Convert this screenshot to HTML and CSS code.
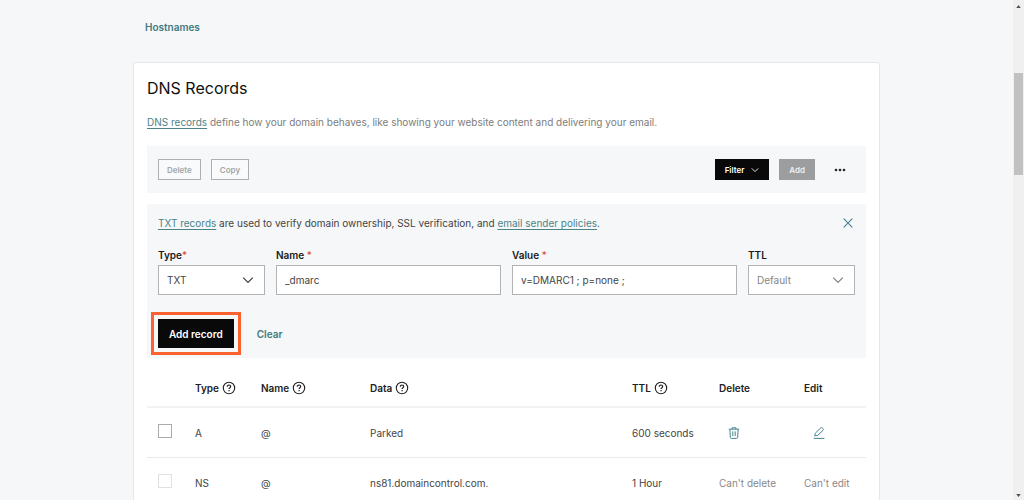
FILE: index.html
```html
<!DOCTYPE html>
<html lang="en">
<head>
<meta charset="utf-8">
<meta name="viewport" content="width=device-width, initial-scale=1">
<title>DNS Records</title>
<link rel="stylesheet" href="styles.css">
</head>
<body>
<svg class="sprite" aria-hidden="true">
  <symbol id="chevron" viewBox="0 0 10 10"><path d="M1 3l4 4 4-4" fill="none" stroke="currentColor" stroke-width="1.1"/></symbol>
  <symbol id="help" viewBox="0 0 14 14"><circle cx="7" cy="7" r="5.700" fill="none" stroke="currentColor" stroke-width="1.1"/><path d="M5.300 5.700c0-1 .7-1.700 1.700-1.700s1.700.6 1.700 1.500c0 1.200-1.600 1.200-1.600 2.400M7.100 9v1.200" fill="none" stroke="currentColor" stroke-width="1.2"/></symbol>
</svg>
<div class="shell">
  <main class="page">
    <nav class="tabs"><a class="tab" href="#hostnames">Hostnames</a></nav>
    <section class="card">
      <h1 class="title">DNS Records</h1>
      <p class="intro"><a class="link" href="#about">DNS records</a> define how your domain behaves, like showing your website content and delivering your email.</p>

      <div class="toolbar">
        <button class="btn btn-outline" type="button" disabled>Delete</button>
        <button class="btn btn-outline" type="button" disabled>Copy</button>
        <span class="spacer"></span>
        <button class="btn btn-dark" type="button">Filter <svg class="btn-icon"><use href="#chevron"/></svg></button>
        <button class="btn btn-grey" type="button" disabled>Add</button>
        <button class="btn-more" type="button" aria-label="More actions"><svg width="12" height="4" viewBox="0 0 12 4"><circle cx="2" cy="2" r="1.300"/><circle cx="6" cy="2" r="1.300"/><circle cx="10" cy="2" r="1.300"/></svg></button>
      </div>

      <form class="record-form">
        <div class="form-head">
          <p class="hint"><a class="link" href="#txt">TXT records</a> are used to verify domain ownership, SSL verification, and <a class="link" href="#policies">email sender policies</a>.</p>
          <button class="btn-close" type="button" aria-label="Close"><svg width="10" height="10" viewBox="0 0 10 10"><path d="M.7.7l8.600 8.600M9.300.7L.7 9.300" fill="none" stroke="currentColor" stroke-width="1.1"/></svg></button>
        </div>
        <div class="fields">
          <div class="field">
            <label class="label" for="type">Type<span class="required">*</span></label>
            <div class="select-wrap">
              <select class="control" id="type"><option>TXT</option></select>
              <svg class="select-icon"><use href="#chevron"/></svg>
            </div>
          </div>
          <div class="field">
            <label class="label" for="name">Name <span class="required">*</span></label>
            <input class="control" id="name" type="text" value="_dmarc">
          </div>
          <div class="field">
            <label class="label" for="value">Value <span class="required">*</span></label>
            <input class="control" id="value" type="text" value="v=DMARC1 ; p=none ;">
          </div>
          <div class="field">
            <label class="label" for="ttl">TTL</label>
            <div class="select-wrap muted">
              <select class="control" id="ttl"><option>Default</option></select>
              <svg class="select-icon"><use href="#chevron"/></svg>
            </div>
          </div>
        </div>
        <div class="actions">
          <button class="btn-submit" type="button">Add record</button>
          <button class="btn-clear" type="reset">Clear</button>
        </div>
      </form>

      <table class="records">
        <colgroup><col class="c-check"><col class="c-type"><col class="c-name"><col><col class="c-ttl"><col class="c-delete"><col class="c-edit"></colgroup>
        <thead>
          <tr>
            <td></td>
            <th scope="col"><span class="th">Type <svg class="help"><use href="#help"/></svg></span></th>
            <th scope="col"><span class="th">Name <svg class="help"><use href="#help"/></svg></span></th>
            <th scope="col"><span class="th">Data <svg class="help"><use href="#help"/></svg></span></th>
            <th scope="col"><span class="th">TTL <svg class="help"><use href="#help"/></svg></span></th>
            <th scope="col">Delete</th>
            <th scope="col">Edit</th>
          </tr>
        </thead>
        <tbody>
          <tr>
            <td class="check-cell"><input class="check" type="checkbox" aria-label="Select A record"></td>
            <td>A</td><td>@</td><td>Parked</td><td>600 seconds</td>
            <td><button class="btn-row" type="button" aria-label="Delete record"><svg width="12" height="12" viewBox="0 0 12 12" fill="none" stroke="currentColor"><path d="M.8 2.200h10.400M4 2V.8h4V2M1.900 2.400l.4 8q.1 1 1.100 1h5.200q1 0 1.100-1l.4-8M4.800 4.300v4.800M7.200 4.300v4.800"/></svg></button></td>
            <td><button class="btn-row" type="button" aria-label="Edit record"><svg width="12" height="12" viewBox="0 0 12 12" fill="none" stroke="currentColor"><path d="M.8 11.400h10.600M1.700 8.900l.6-2.700L7.600 1q.9-.8 1.800 0l.6.6q.8.9 0 1.800L4.600 8.500z"/></svg></button></td>
          </tr>
          <tr>
            <td class="check-cell"><input class="check" type="checkbox" aria-label="Select NS record" disabled></td>
            <td>NS</td><td>@</td><td>ns81.domaincontrol.com.</td><td>1 Hour</td>
            <td class="na">Can't delete</td>
            <td class="na">Can't edit</td>
          </tr>
        </tbody>
      </table>
    </section>
  </main>
  <div class="scrollbar" aria-hidden="true">
    <svg class="arrow" viewBox="0 0 6 4"><path d="M0 4l3-4 3 4z"/></svg>
    <div class="track"><div class="thumb"></div></div>
    <svg class="arrow" viewBox="0 0 6 4"><path d="M0 0l3 4 3-4z"/></svg>
  </div>
</div>
</body>
</html>
```

FILE: styles.css
```css
* { box-sizing: border-box; }

body {
  margin: 0;
  background: #f5f7f8;
  color: #444;
  font: 10px/16px Inter, "Liberation Sans", sans-serif;
}

button, input, select { font: inherit; color: inherit; }
button { padding: 0; border: 0; background: none; cursor: pointer; }
h1, p { margin: 0; }
.sprite { display: none; }

.shell { display: flex; height: 100vh; overflow: hidden; }
.page { flex: 1; padding: 0 16px; overflow: hidden; }

.tabs, .card { max-width: 747px; margin: 0 auto; }
.tabs { padding: 19px 12px 27px; }
.tab { display: block; color: #3f7a80; font-weight: 600; text-decoration: none; }

.card {
  padding: 13px 13px 24px;
  border: 1px solid #e4e8ea;
  border-radius: 3px;
  background: #fff;
}
.title { color: #111; font-size: 16px; line-height: 24px; font-weight: 400; }
.intro { margin-top: 14px; color: #7d7d7d; }
.link { color: #4b8388; text-decoration: underline; text-underline-offset: 2px; }

.toolbar {
  display: flex;
  align-items: center;
  gap: 10px;
  margin-top: 16px;
  padding: 13px 11px;
  background: #f5f7f8;
}
.spacer { flex: 1; }
.btn {
  display: flex;
  align-items: center;
  height: 21px;
  padding: 0 10px;
  font-size: 8px;
  font-weight: 600;
}
.btn-outline { border: 1px solid #adafb0; padding: 0 8px; background: #f9fafb; color: #a4a6a7; }
.btn-dark { gap: 7px; background: #090909; color: #fff; }
.btn-grey { background: #9c9d9e; color: #f2f2f2; }
.btn-icon { width: 8px; height: 8px; }
.btn-more { display: flex; justify-content: center; width: 30px; fill: #222; }

.record-form { margin-top: 11px; padding: 11px 11px 10px; background: #f5f7f8; }
.form-head { display: flex; justify-content: space-between; align-items: center; }
.btn-close { display: flex; padding: 2px; color: #45838f; }

.fields { display: grid; grid-template-columns: 107px 1fr 1fr 107px; gap: 11px; margin-top: 16px; }
.label { display: block; margin-bottom: 2px; color: #1a1a1a; font-weight: 600; }
.required { color: #d6492a; font-weight: 400; }
.control {
  display: block;
  width: 100%;
  height: 30px;
  padding: 0 8px;
  border: 1px solid #b2b3b4;
  border-radius: 0;
  background: #fff;
  appearance: none;
}
.select-wrap { position: relative; }
.select-icon { position: absolute; top: 9px; right: 11px; width: 12px; height: 12px; pointer-events: none; }
.muted { color: #858585; }

.actions { display: flex; align-items: center; gap: 23px; margin-top: 24px; }
.btn-submit {
  height: 29px;
  padding: 0 11px;
  background: #090909;
  color: #fff;
  font-weight: 600;
  outline: 3px solid #fc6130;
  outline-offset: 4px;
}
.btn-clear { color: #3f7a80; font-weight: 600; }

.records { width: 100%; margin-top: 12px; border-collapse: collapse; table-layout: fixed; }
.c-check { width: 48px; }
.c-type { width: 66px; }
.c-name { width: 109px; }
.c-ttl { width: 87px; }
.c-delete { width: 85px; }
.c-edit { width: 62px; }
.records th, .records td { padding: 0; text-align: left; white-space: nowrap; }
.records th { height: 37px; color: #222; font-weight: 600; }
.records thead tr { border-bottom: 2px solid #f1f2f2; }
.records tbody tr { height: 50px; border-bottom: 1px solid #e9eaeb; }
.records tbody td { padding-top: 2px; }
.th { display: flex; align-items: center; gap: 3px; }
.help { width: 14px; height: 14px; }
.records tbody .check-cell { padding: 0 0 3px 11px; }
.check {
  display: block;
  width: 14px;
  height: 14px;
  margin: 0;
  border: 1px solid #a9abac;
  background: #fff;
  appearance: none;
}
.check:disabled { border-color: #dfe1e1; }
.btn-row { display: flex; margin-left: 9px; color: #45858c; }
.records .na { color: #888; }

.scrollbar {
  display: flex;
  flex-direction: column;
  align-items: center;
  width: 11px;
  padding: 5px 1px 3px;
  background: #f0f0f0;
}
.arrow { width: 5px; height: 3px; fill: #505050; }
.track { flex: 1; width: 100%; padding-top: 65px; }
.thumb { height: 21%; min-height: 102px; background: #c1c1c1; }
```
